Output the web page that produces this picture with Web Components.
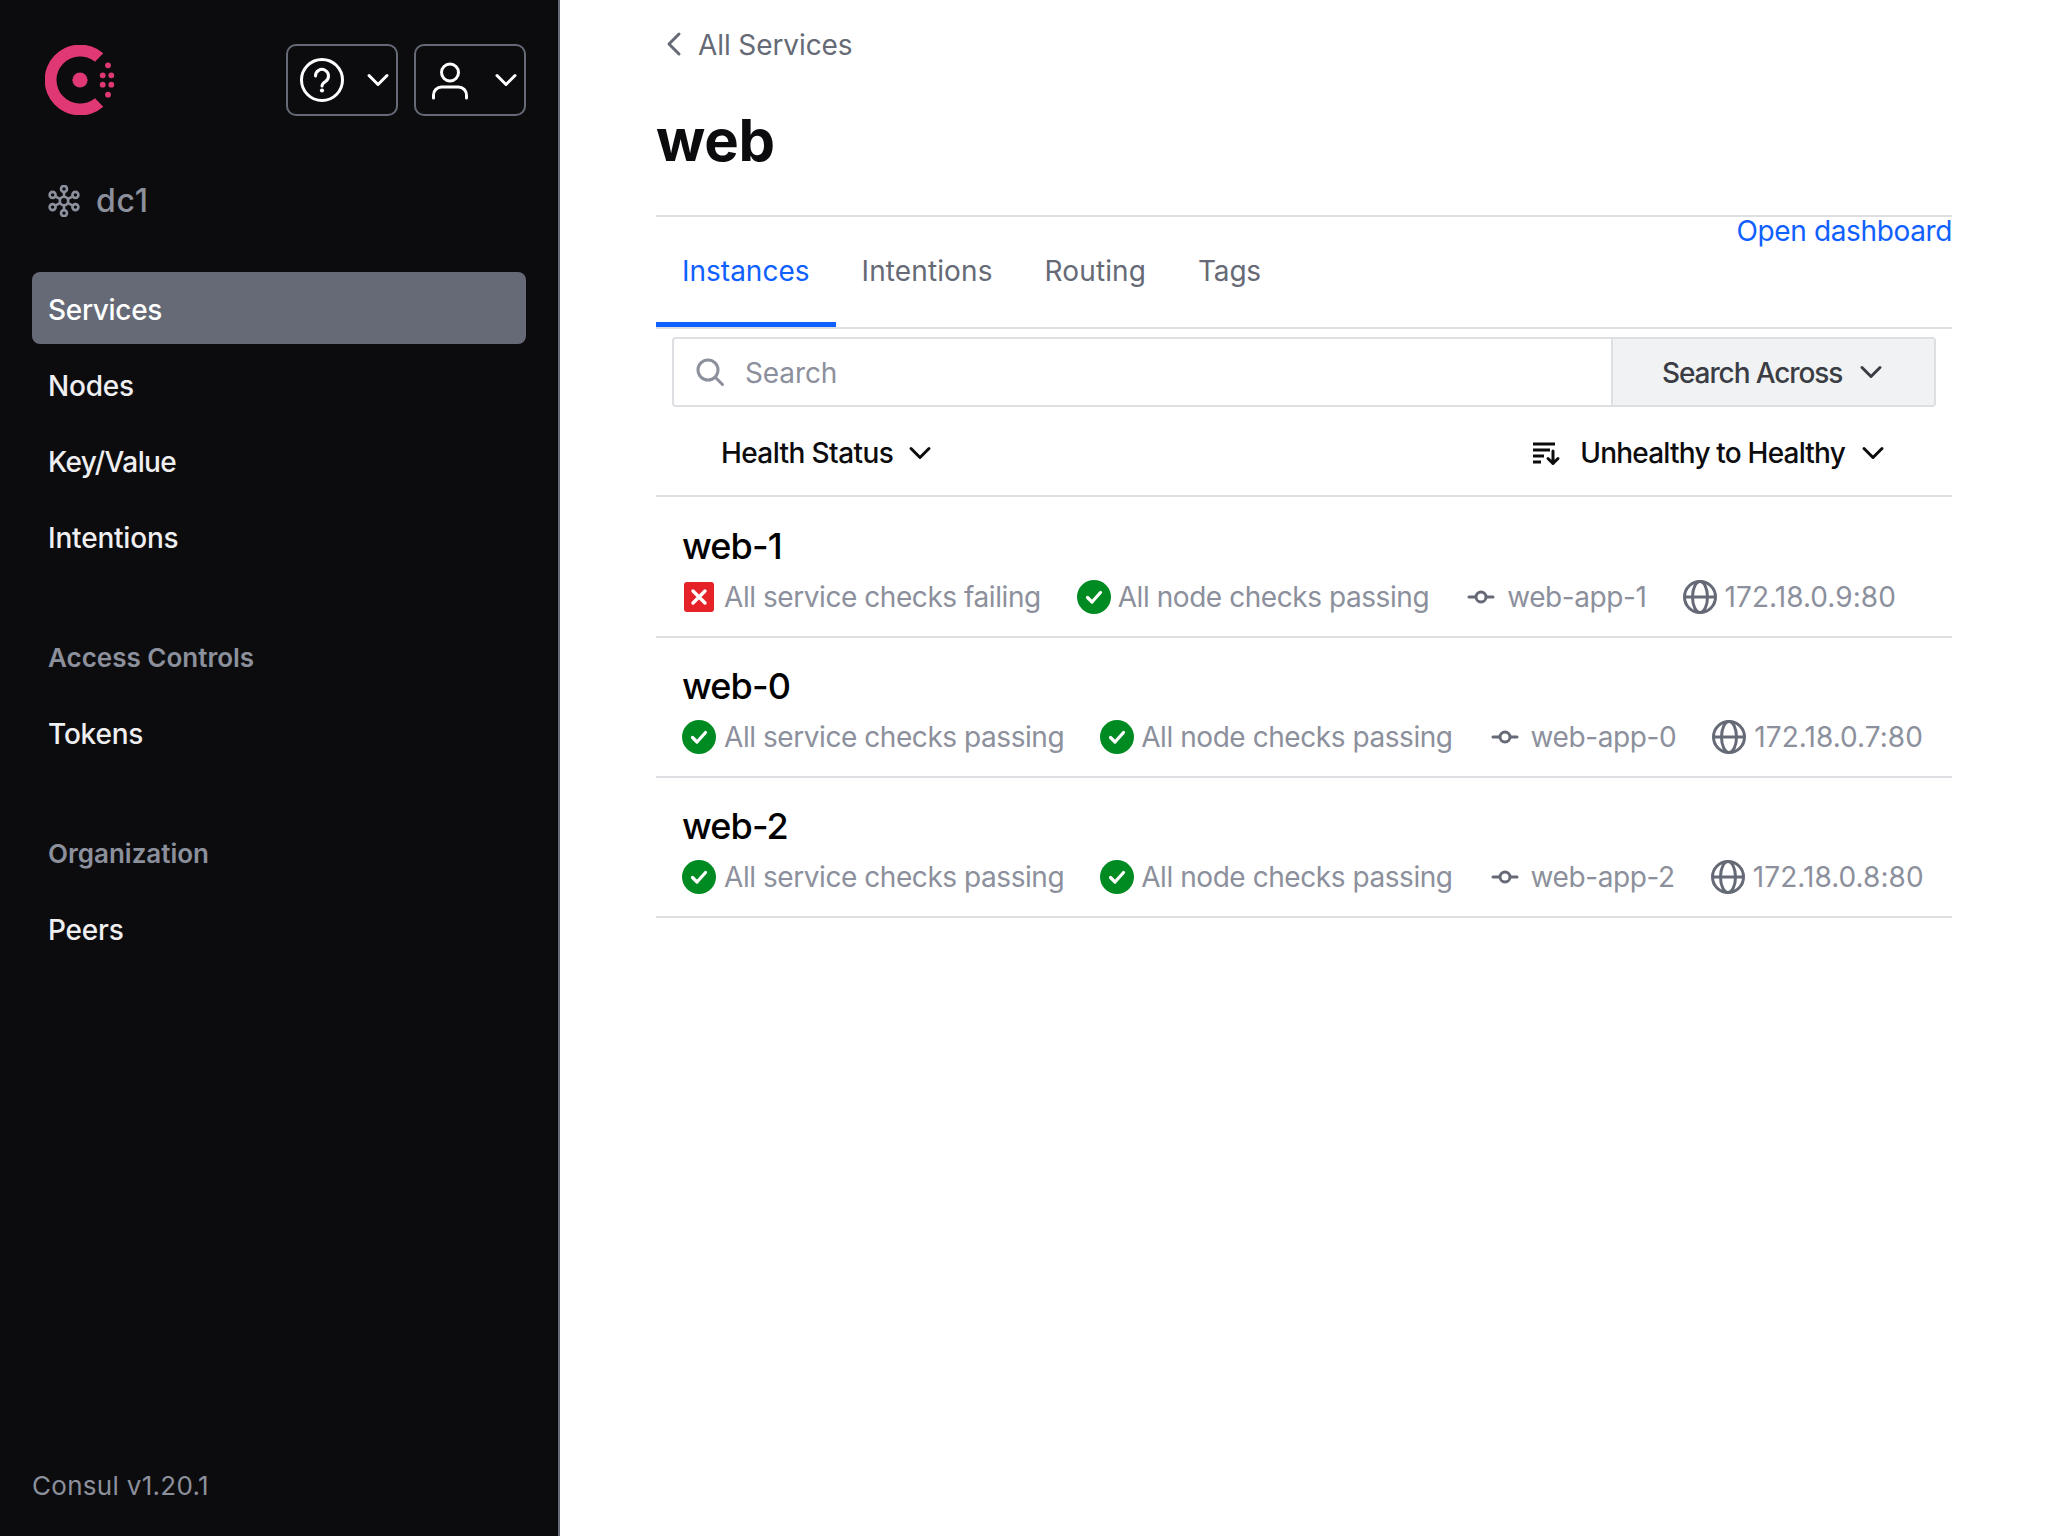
<!DOCTYPE html>
<html lang="en">
<head>
<meta charset="utf-8">
<title>web - Consul</title>
<style>
  html, body { margin: 0; height: 100%; background: #fff; }
  body { font-family: Inter, "Liberation Sans", sans-serif; }
</style>
</head>
<body>
<consul-app>
  <side-nav slot="nav">
    <nav-item active>Services</nav-item>
    <nav-item>Nodes</nav-item>
    <nav-item style="letter-spacing:-.6px">Key/Value</nav-item>
    <nav-item>Intentions</nav-item>
    <nav-heading>Access Controls</nav-heading>
    <nav-item>Tokens</nav-item>
    <nav-heading>Organization</nav-heading>
    <nav-item>Peers</nav-item>
  </side-nav>
  <page-header></page-header>
  <tab-bar>
    <tab-item active style="letter-spacing:0">Instances</tab-item>
    <tab-item>Intentions</tab-item>
    <tab-item>Routing</tab-item>
    <tab-item style="letter-spacing:-.2px">Tags</tab-item>
  </tab-bar>
  <search-bar></search-bar>
  <filter-bar></filter-bar>
  <instance-row name="web-1" service="fail" node="web-app-1" address="172.18.0.9:80"></instance-row>
  <instance-row name="web-0" service="pass" node="web-app-0" address="172.18.0.7:80"></instance-row>
  <instance-row name="web-2" service="pass" node="web-app-2" address="172.18.0.8:80"></instance-row>
</consul-app>

<script>
(function () {

  // icon bodies, keyed by name. each one draws in its own viewBox
  const icons = {
    chevron: { box: 36, body: '<path fill="none" stroke="currentColor" stroke-width="3" stroke-linecap="round" stroke-linejoin="round" d="M9 13.5L18 22.5 27 13.5"/>' },
    back: { box: 36, body: '<path fill="none" stroke="currentColor" stroke-width="3" stroke-linecap="round" stroke-linejoin="round" d="M23 7L13 17 23 27"/>' },
    help: { box: 48, body: '<g fill="none" stroke="currentColor" stroke-width="3" stroke-linecap="round"><circle cx="24" cy="24" r="20.5"/><path d="M17.5 20a6.5 6.5 0 1 1 10 5.4c-2.2 1.4-3.5 2.4-3.5 4.6"/></g><circle cx="24" cy="34.5" r="2.1" fill="currentColor"/>' },
    user: { box: 48, body: '<g fill="none" stroke="currentColor" stroke-width="3" stroke-linecap="round"><circle cx="24" cy="16.5" r="8.5"/><path d="M7.5 42v-3a8 8 0 0 1 8-8h17a8 8 0 0 1 8 8v3"/></g>' },
    datacenter: { box: 32, body: '<g fill="none" stroke="currentColor" stroke-width="2.6"><circle cx="16" cy="16" r="4.2"/><circle cx="16" cy="3.9" r="3"/><circle cx="16" cy="28.1" r="3"/><circle cx="4.6" cy="9.9" r="3"/><circle cx="27.4" cy="9.9" r="3"/><circle cx="4.6" cy="22.1" r="3"/><circle cx="27.4" cy="22.1" r="3"/><path d="M16 6.5v5.5M16 20v5.5M7.2 11.3l5.2 2.8M24.8 11.3l-5.2 2.8M7.2 20.7l5.2-2.8M24.8 20.7l-5.2-2.8"/></g>' },
    search: { box: 32, body: '<g fill="none" stroke="currentColor" stroke-width="3" stroke-linecap="round"><circle cx="14" cy="14" r="10"/><path d="M21.5 21.5L28.5 28.5"/></g>' },
    sort: { box: 32, body: '<g fill="none" stroke="currentColor" stroke-width="3" stroke-linejoin="round" stroke-linecap="round"><path stroke-linecap="butt" d="M4 7H26M4 13H21M4 19H15M4 25H12"/><path d="M24 14V26.5M19 21.5L24 26.5 29 21.5"/></g>' },
    pass: { box: 34, body: '<circle cx="17" cy="17" r="17" fill="#008a22"/><path fill="none" stroke="#fff" stroke-width="3.2" stroke-linecap="round" stroke-linejoin="round" d="M10.5 17.5L15 22 23.5 12.5"/>' },
    fail: { box: 34, body: '<rect x="2" y="2" width="30" height="30" rx="3" fill="#e52228"/><path fill="none" stroke="#fff" stroke-width="3.4" stroke-linecap="round" d="M11 11L23 23M23 11L11 23"/>' },
    node: { box: 34, body: '<g fill="none" stroke="#656a76" stroke-width="3" stroke-linecap="round"><circle cx="16" cy="17" r="5"/><path d="M4 17H10.5M21.5 17H28"/></g>' },
    globe: { box: 34, body: '<g fill="none" stroke="#656a76" stroke-width="3"><circle cx="17" cy="17" r="15.5"/><ellipse cx="17" cy="17" rx="7.5" ry="15.5"/><path d="M1.5 17H32.5"/></g>' }
  };

  class SvcIcon extends HTMLElement {
    static get observedAttributes() {
      return ['name'];
    }

    constructor() {
      super();
      this.attachShadow({ mode: 'open' });
    }

    attributeChangedCallback() {
      const icon = icons[this.getAttribute('name')];
      if (!icon) return;
      const size = this.getAttribute('size') || icon.box;
      this.shadowRoot.innerHTML =
        '<style>:host { display: inline-flex; flex: none; } svg { display: block; }</style>' +
        '<svg width="' + size + '" height="' + size + '" viewBox="0 0 ' + icon.box + ' ' + icon.box + '" aria-hidden="true">' + icon.body + '</svg>';
    }
  }
  customElements.define('svc-icon', SvcIcon);

  const appTemplate = document.createElement('template');
  appTemplate.innerHTML = `
    <style>
      :host { display: grid; grid-template-columns: 560px 1fr; min-height: 1536px; }
      main { padding: 0 96px; min-width: 0; }
    </style>
    <slot name="nav"></slot>
    <main><slot></slot></main>`;

  class ConsulApp extends HTMLElement {
    constructor() {
      super();
      this.attachShadow({ mode: 'open' });
      this.shadowRoot.appendChild(appTemplate.content.cloneNode(true));
    }
  }
  customElements.define('consul-app', ConsulApp);

  const sideTemplate = document.createElement('template');
  sideTemplate.innerHTML = `
    <style>
      :host {
        display: flex; flex-direction: column; box-sizing: border-box; height: 1536px;
        padding: 44px 32px 30px; background: #0c0c0e; border-right: 2px solid #656a76;
        font-size: 28px; line-height: 40px;
      }
      header { display: flex; align-items: center; height: 72px; }
      .logo { margin-left: 13px; margin-right: auto; display: block; }
      button {
        display: flex; align-items: center; box-sizing: border-box; width: 112px; height: 72px;
        margin: 0 0 0 16px; padding: 0 0 0 10px; gap: 14px;
        background: transparent; border: 2px solid #656a76; border-radius: 10px; color: #fff;
      }
      .dc {
        display: flex; align-items: center; gap: 16px; height: 48px; margin: 60px 0 0 16px; padding-top: 1px;
        color: #8c909c; font-size: 32px; font-weight: 500; letter-spacing: .8px;
      }
      nav { display: flex; flex-direction: column; gap: 4px; margin-top: 47px; }
      footer { margin-top: auto; color: #8c909c; font-size: 26px; letter-spacing: .3px; }
    </style>
    <header>
      <svg class="logo" width="72" height="70" viewBox="45 45 72 70" aria-hidden="true">
        <path fill="#e03875" d="M103.3 53.3A35.4 35.4 0 1 0 103.3 106.7L95 98.3A23.6 23.6 0 1 1 95 61.7Z"/>
        <g fill="#e03875">
          <circle cx="80" cy="80" r="7.6"/>
          <circle cx="108" cy="65.3" r="2.9"/>
          <circle cx="102.7" cy="75.3" r="2.9"/>
          <circle cx="111.3" cy="75.3" r="2.9"/>
          <circle cx="102.7" cy="84.7" r="2.9"/>
          <circle cx="111.3" cy="84.7" r="2.9"/>
          <circle cx="108" cy="94.7" r="2.9"/>
        </g>
      </svg>
      <button aria-label="Help"><svc-icon name="help"></svc-icon><svc-icon name="chevron"></svc-icon></button>
      <button aria-label="Account"><svc-icon name="user"></svc-icon><svc-icon name="chevron"></svc-icon></button>
    </header>
    <div class="dc"><svc-icon name="datacenter"></svc-icon><span>dc1</span></div>
    <nav><slot></slot></nav>
    <footer>Consul v1.20.1</footer>`;

  class SideNav extends HTMLElement {
    constructor() {
      super();
      this.attachShadow({ mode: 'open' });
      this.shadowRoot.appendChild(sideTemplate.content.cloneNode(true));
    }
  }
  customElements.define('side-nav', SideNav);

  const itemTemplate = document.createElement('template');
  itemTemplate.innerHTML = `
    <style>
      :host {
        display: flex; align-items: center; box-sizing: border-box; height: 72px; padding: 4px 16px 0;
        border-radius: 8px; color: #efeff1; font-weight: 500; font-size: 28px; letter-spacing: -.2px;
      }
      :host([active]) { background: #656a76; color: #fff; letter-spacing: -.33px; }
    </style>
    <slot></slot>`;

  class NavItem extends HTMLElement {
    constructor() {
      super();
      this.attachShadow({ mode: 'open' });
      this.shadowRoot.appendChild(itemTemplate.content.cloneNode(true));
    }
  }
  customElements.define('nav-item', NavItem);

  const headingTemplate = document.createElement('template');
  headingTemplate.innerHTML = `
    <style>
      :host {
        display: block; margin: 60px 0 14px; padding: 2px 16px 0;
        color: #8c909c; font-size: 26px; font-weight: 600; line-height: 40px;
      }
    </style>
    <slot></slot>`;

  class NavHeading extends HTMLElement {
    constructor() {
      super();
      this.attachShadow({ mode: 'open' });
      this.shadowRoot.appendChild(headingTemplate.content.cloneNode(true));
    }
  }
  customElements.define('nav-heading', NavHeading);

  const headerTemplate = document.createElement('template');
  headerTemplate.innerHTML = `
    <style>
      :host { display: block; padding-top: 25px; border-bottom: 2px solid #dedfe3; }
      .back { display: flex; align-items: center; gap: 6px; height: 40px; color: #656a76; font-size: 28px; font-weight: 400; letter-spacing: -.1px; text-decoration: none; }
      h1 { margin: 41px 0 41px; color: #0c0c0e; font-size: 58px; line-height: 68px; font-weight: 700; letter-spacing: -.3px; }
    </style>
    <a class="back" href="#"><svc-icon name="back"></svc-icon>All Services</a>
    <h1>web</h1>`;

  class PageHeader extends HTMLElement {
    constructor() {
      super();
      this.attachShadow({ mode: 'open' });
      this.shadowRoot.appendChild(headerTemplate.content.cloneNode(true));
    }
  }
  customElements.define('page-header', PageHeader);

  const tabsTemplate = document.createElement('template');
  tabsTemplate.innerHTML = `
    <style>
      :host { display: flex; position: relative; height: 110px; border-bottom: 2px solid #dedfe3; }
      /* the link sits over the tab strip, it takes no room of its own */
      a { position: absolute; top: -6px; right: 0; color: #1060ff; font-size: 28px; letter-spacing: -.37px; line-height: 40px; text-decoration: none; }
    </style>
    <slot></slot>
    <a href="#">Open dashboard</a>`;

  class TabBar extends HTMLElement {
    constructor() {
      super();
      this.attachShadow({ mode: 'open' });
      this.shadowRoot.appendChild(tabsTemplate.content.cloneNode(true));
    }
  }
  customElements.define('tab-bar', TabBar);

  const tabTemplate = document.createElement('template');
  tabTemplate.innerHTML = `
    <style>
      :host {
        display: flex; align-items: center; box-sizing: border-box; height: 110px; padding: 3px 26px 0;
        color: #656a76; font-size: 28px; letter-spacing: .12px; border-bottom: 5px solid transparent;
      }
      :host([active]) { color: #1060ff; border-bottom-color: #1060ff; }
    </style>
    <slot></slot>`;

  class TabItem extends HTMLElement {
    constructor() {
      super();
      this.attachShadow({ mode: 'open' });
      this.shadowRoot.appendChild(tabTemplate.content.cloneNode(true));
    }
  }
  customElements.define('tab-item', TabItem);

  const searchTemplate = document.createElement('template');
  searchTemplate.innerHTML = `
    <style>
      :host {
        display: flex; box-sizing: border-box; height: 70px; margin: 8px 16px 0;
        border: 2px solid #dedfe3; border-radius: 4px; font-size: 28px;
      }
      .field { flex: 1; display: flex; align-items: center; gap: 19px; padding-left: 20px; color: #8c909c; }
      .field span { padding-top: 2px; letter-spacing: -.1px; }
      .across {
        display: flex; align-items: center; gap: 11px; width: 323px; box-sizing: border-box; padding-left: 49px;
        background: #f1f2f3; border-left: 2px solid #dedfe3; color: #3b3d45; font-weight: 500;
      }
      .across span { padding-top: 2px; letter-spacing: -1.1px; }
    </style>
    <div class="field"><svc-icon name="search"></svc-icon><span>Search</span></div>
    <div class="across"><span>Search Across</span><svc-icon name="chevron"></svc-icon></div>`;

  class SearchBar extends HTMLElement {
    constructor() {
      super();
      this.attachShadow({ mode: 'open' });
      this.shadowRoot.appendChild(searchTemplate.content.cloneNode(true));
    }
  }
  customElements.define('search-bar', SearchBar);

  const filterTemplate = document.createElement('template');
  filterTemplate.innerHTML = `
    <style>
      :host {
        display: flex; align-items: center; justify-content: space-between; box-sizing: border-box; height: 90px;
        padding: 4px 61px 0 65px; border-bottom: 2px solid #dedfe3; color: #0c0c0e; font-size: 28px; font-weight: 500;
      }
      div { display: flex; align-items: center; gap: 10px; }
      .sort { margin-right: 9px; }
      .status { letter-spacing: -.6px; margin-right: -1px; }
      .order { letter-spacing: -.8px; }
    </style>
    <div><span class="status">Health Status</span><svc-icon name="chevron"></svc-icon></div>
    <div><svc-icon class="sort" name="sort"></svc-icon><span class="order">Unhealthy to Healthy</span><svc-icon name="chevron"></svc-icon></div>`;

  class FilterBar extends HTMLElement {
    constructor() {
      super();
      this.attachShadow({ mode: 'open' });
      this.shadowRoot.appendChild(filterTemplate.content.cloneNode(true));
    }
  }
  customElements.define('filter-bar', FilterBar);

  const rowTemplate = document.createElement('template');
  rowTemplate.innerHTML = `
    <style>
      :host {
        display: block; box-sizing: border-box; height: 140px; padding: 26px 0 0 26px;
        border-bottom: 2px solid #dedfe3;
      }
      :host(:first-of-type) { height: 141px; padding-top: 27px; }
      h2 { margin: 0; color: #000; font-size: 36px; line-height: 44px; font-weight: 500; letter-spacing: -.9px; }
      .meta { display: flex; align-items: center; gap: 36px; margin-top: 9px; color: #8c909c; font-size: 28px; line-height: 40px; }
      .meta div { display: flex; align-items: center; gap: 8px; }
      .meta .node-check { gap: 7px; }
      .check { letter-spacing: -.44px; }
      .node-text { letter-spacing: -.4px; }
      .address { letter-spacing: .05px; }
    </style>
    <h2></h2>
    <div class="meta">
      <div><svc-icon class="service"></svc-icon><span class="service-text check"></span></div>
      <div class="node-check"><svc-icon name="pass"></svc-icon><span class="check">All node checks passing</span></div>
      <div><svc-icon name="node"></svc-icon><span class="node-text"></span></div>
      <div><svc-icon name="globe"></svc-icon><span class="address"></span></div>
    </div>`;

  class InstanceRow extends HTMLElement {
    constructor() {
      super();
      this.attachShadow({ mode: 'open' });
      this.shadowRoot.appendChild(rowTemplate.content.cloneNode(true));
    }

    connectedCallback() {
      const root = this.shadowRoot;
      const service = this.getAttribute('service');
      root.querySelector('h2').textContent = this.getAttribute('name');
      root.querySelector('.service').setAttribute('name', service);
      root.querySelector('.service-text').textContent =
        service === 'fail' ? 'All service checks failing' : 'All service checks passing';
      root.querySelector('.node-text').textContent = this.getAttribute('node');
      root.querySelector('.address').textContent = this.getAttribute('address');
    }
  }
  customElements.define('instance-row', InstanceRow);

})();
</script>
</body>
</html>
